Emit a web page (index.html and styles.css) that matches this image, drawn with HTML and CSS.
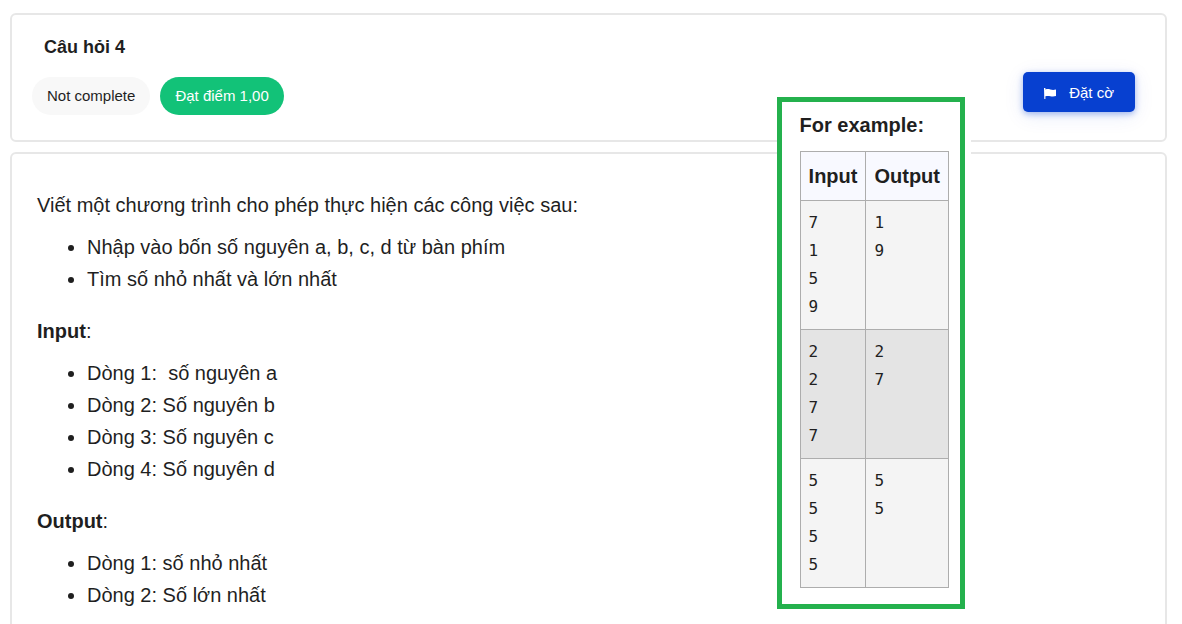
FILE: index.html
```
<!DOCTYPE html>
<html lang="vi">
<head>
<meta charset="utf-8">
<meta name="viewport" content="width=device-width, initial-scale=1">
<title>Câu hỏi 4</title>
<link rel="stylesheet" href="styles.css">
</head>
<body>
<main class="page">
  <header class="card info">
    <div class="info-main">
      <h1 class="info-title">Câu hỏi 4</h1>
      <div class="badges">
        <span class="badge">Not complete</span>
        <span class="badge badge-grade">Đạt điểm 1,00</span>
      </div>
    </div>
    <button class="flag-button" type="button">
      <svg class="flag-icon" viewBox="0 0 12 14" aria-hidden="true"><path d="M0 3h1.400v1.500C3.500 3.900 4.600 4.100 6.300 4.500c2 .5 3.500.5 5.700 0v6.600c-2 .6-3.800.6-5.700.1C4.500 10.800 3.200 10.800 1.400 11.300V14H.3Z" fill="currentColor"/></svg>
      <span>Đặt cờ</span>
    </button>
  </header>

  <article class="card question">
    <p>Viết một chương trình cho phép thực hiện các công việc sau:</p>
    <ul>
      <li>Nhập vào bốn số nguyên a, b, c, d từ bàn phím</li>
      <li>Tìm số nhỏ nhất và lớn nhất</li>
    </ul>
    <p><strong>Input</strong>:</p>
    <ul>
      <li>Dòng 1:&nbsp; số nguyên a</li>
      <li>Dòng 2: Số nguyên b</li>
      <li>Dòng 3: Số nguyên c</li>
      <li>Dòng 4: Số nguyên d</li>
    </ul>
    <p><strong>Output</strong>:</p>
    <ul>
      <li>Dòng 1: số nhỏ nhất</li>
      <li>Dòng 2: Số lớn nhất</li>
    </ul>
  </article>

  <aside class="example">
    <h2 class="example-title" id="example-title">For example:</h2>
    <table class="example-table" aria-labelledby="example-title">
      <thead>
        <tr><th scope="col">Input</th><th scope="col">Output</th></tr>
      </thead>
      <tbody>
        <tr><td><pre>7
1
5
9</pre></td><td><pre>1
9</pre></td></tr>
        <tr><td><pre>2
2
7
7</pre></td><td><pre>2
7</pre></td></tr>
        <tr><td><pre>5
5
5
5</pre></td><td><pre>5
5</pre></td></tr>
      </tbody>
    </table>
  </aside>
</main>
</body>
</html>
```

FILE: styles.css
```
* {
  box-sizing: border-box;
}

body {
  margin: 0;
  background: #fff;
  color: #1f1f1f;
  font-family: "Liberation Sans", Arial, sans-serif;
  font-size: 20px;
  line-height: 32px;
}

.page {
  position: relative;
  display: flex;
  flex-direction: column;
  gap: 10px;
  padding: 13px 15px 0 10px;
}

.card {
  border: 2px solid #e7e7e7;
  border-radius: 6px;
}

.info {
  display: flex;
  justify-content: space-between;
  align-items: flex-end;
  padding: 16px 30px 25px 20px;
}

.info-title {
  margin: 0 0 14px;
  padding-left: 12px;
  font-size: 18px;
  line-height: 32px;
}

.badges {
  display: flex;
  gap: 10px;
}

.badge {
  padding: 0 15px;
  border-radius: 19px;
  background: #f8f8f8;
  font-size: 15px;
  line-height: 38px;
}

.badge-grade {
  background: #12c278;
  color: #fff;
}

.flag-button {
  display: flex;
  align-items: center;
  gap: 13px;
  height: 40px;
  margin-bottom: 3px;
  padding: 0 21px;
  border: 0;
  border-radius: 5px;
  background: #0740d0;
  box-shadow: 0 2px 6px rgba(7, 64, 208, 0.35), 0 4px 20px rgba(7, 64, 208, 0.1);
  color: #fff;
  font: 15px "Liberation Sans", Arial, sans-serif;
}

.flag-icon {
  width: 12px;
  height: 14px;
}

.question {
  padding: 35px 25px 20px;
}

.question p {
  margin: 0 0 10px;
}

.question ul {
  margin: 0 0 20px;
  padding-left: 50px;
}

.example {
  position: absolute;
  top: 97px;
  right: 217px;
  padding: 7px 11px 16px 18px;
  border: 5px solid #24b14d;
  background: #fff;
  box-shadow: 6px 0 0 #fff;
}

.example-title {
  margin: 0 0 10px;
  font-size: 20px;
  line-height: 32px;
}

.example-table {
  border-collapse: collapse;
}

.example-table th,
.example-table td {
  padding: 8px;
  border: 1px solid #adadad;
  text-align: left;
  vertical-align: top;
}

.example-table th {
  background: #f8f9ff;
}

.example-table td {
  background: #f4f4f4;
}

.example-table tr:nth-child(even) td {
  background: #e4e4e4;
}

.example-table pre {
  margin: 0;
  font-family: "DejaVu Sans Mono", monospace;
  font-size: 16px;
  line-height: 28px;
}
```
